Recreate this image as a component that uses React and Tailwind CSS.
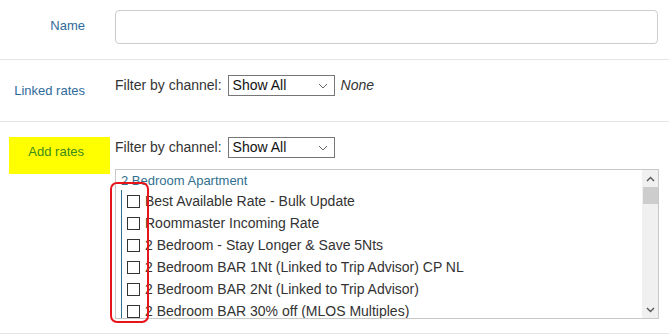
import React from "react";

const font = { fontFamily: '"Liberation Sans", Arial, sans-serif' };

function Chevron({ up }) {
  return (
    <svg width="9" height="6" viewBox="0 0 9 6" className="block">
      <polyline
        points={up ? "1,5 4.5,1.5 8,5" : "1,1 4.5,4.5 8,1"}
        fill="none"
        stroke="#555"
        strokeWidth="1.4"
      />
    </svg>
  );
}

function Select() {
  return (
    <div className="flex items-center justify-between w-[107px] h-[21px] border border-[#767676] bg-white pl-[4px] pr-[4px] text-[14px] text-[#111]">
      <span className="leading-[19px]">Show All</span>
      <svg width="10" height="6" viewBox="0 0 10 6" className="block mr-[2px]">
        <polyline points="1,1 5,5 9,1" fill="none" stroke="#666" strokeWidth="1" />
      </svg>
    </div>
  );
}

const items = [
  "Best Available Rate - Bulk Update",
  "Roommaster Incoming Rate",
  "2 Bedroom - Stay Longer & Save 5Nts",
  "2 Bedroom BAR 1Nt (Linked to Trip Advisor) CP NL",
  "2 Bedroom BAR 2Nt (Linked to Trip Advisor)",
  "2 Bedroom BAR 30% off (MLOS Multiples)",
];

export default function App() {
  return (
    <div className="relative w-[669px] h-[335px] bg-white overflow-hidden text-[#333]" style={font}>
      {/* Row 1 */}
      <div className="flex h-[60px] border-b border-[#e5e5e5]">
        <div className="w-[115px] pr-[30px] text-right text-[13px] leading-[20px] text-[#2f6b9a] mt-[16px]">Name</div>
        <div className="flex-1 mr-[11px] mt-[10px] h-[34px] rounded-[4px] border border-[#cccccc] bg-white" />
      </div>
      {/* Row 2 */}
      <div className="flex h-[62px] border-b border-[#e5e5e5]">
        <div className="w-[115px] pr-[30px] text-right text-[13px] leading-[20px] text-[#2f6b9a] mt-[21px]">Linked rates</div>
        <div className="flex items-center mt-[15px] h-[21px] text-[14px]">
          <span className="mr-[6px]">Filter by channel:</span>
          <Select />
          <span className="ml-[6px] italic">None</span>
        </div>
      </div>
      {/* Row 3 */}
      <div className="flex h-[212px] border-b border-[#e5e5e5]">
        <div className="w-[115px]">
          <div className="ml-[9px] mt-[15px] w-[101px] h-[37px] bg-[#ffff00] pr-[26px] pt-[5px] text-right text-[13px] leading-[20px] text-[#3b8a1f]">
            Add rates
          </div>
        </div>
        <div className="flex-1 mr-[10px] flex flex-col">
          <div className="flex items-center mt-[15px] h-[21px] text-[14px]">
            <span className="mr-[6px]">Filter by channel:</span>
            <Select />
          </div>
          <div className="mt-[11px] h-[150px] border border-[#c8c8c8] flex overflow-hidden">
            <div className="flex-1 overflow-hidden pt-[2px]">
              <div className="pl-[5px] text-[13px] leading-[18px] text-[#31708f]">2 Bedroom Apartment</div>
              <div className="ml-[5px] border-l border-[#31708f]">
                {items.map((t) => (
                  <div key={t} className="flex items-center h-[22px] pl-[5px] text-[14px] whitespace-nowrap">
                    <span className="w-[13px] h-[13px] border border-[#333] bg-white mr-[5px] shrink-0" />
                    <span>{t}</span>
                  </div>
                ))}
              </div>
            </div>
            <div className="w-[16px] bg-[#f0f0f0] flex flex-col items-center">
              <div className="h-[17px] flex items-center justify-center"><Chevron up /></div>
              <div className="w-[15px] h-[17px] bg-[#cdcdcd]" />
              <div className="flex-1" />
              <div className="h-[17px] flex items-center justify-center"><Chevron /></div>
            </div>
          </div>
        </div>
      </div>
      {/* Annotation */}
      <div className="absolute left-[110px] top-[182px] w-[39px] h-[141px] border-2 border-[#e8141b] rounded-[7px]" />
    </div>
  );
}
